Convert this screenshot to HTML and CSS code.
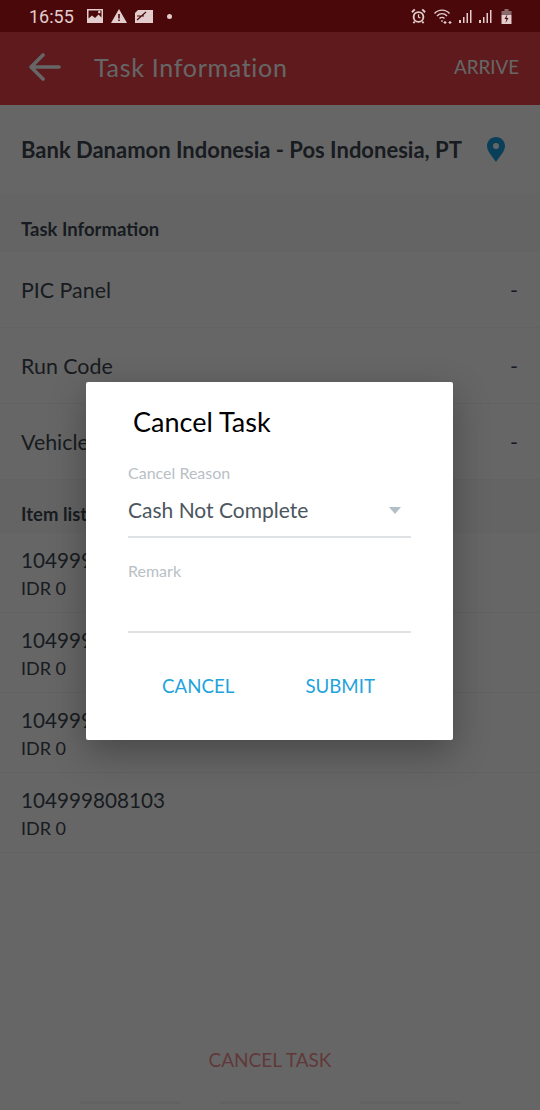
FILE: index.html
```html
<!DOCTYPE html>
<html lang="en">
<head>
    <meta charset="UTF-8">
    <meta name="viewport" content="width=device-width, initial-scale=1.0">
    <title>Task Information</title>
    <link rel="stylesheet" href="styles.css">
</head>
<body>
    <div id="phone">
        <div id="status-bar">
            <div class="status-left">
                <span class="clock">16:55</span>
                <!-- picture -->
                <svg class="status-icon" width="16" height="14" viewBox="0 0 16 14"><path fill="#e2cccc" fill-rule="evenodd" d="M0 0h16v14H0zM1.500 1.500v8l3.500-3 3 2.500 3.500-3.500 3 3V1.500zM11 3a1.300 1.300 0 1 1 0 .01z"/></svg>
                <!-- warning -->
                <svg class="status-icon warn" width="16" height="14" viewBox="0 0 16 14"><path fill="#e2cccc" fill-rule="evenodd" d="M8 0l8 14H0zM7.200 5v4.500h1.600V5zM7.200 10.500V12h1.600v-1.500z"/></svg>
                <!-- card -->
                <svg class="status-icon" width="18" height="13" viewBox="0 0 18 13"><path fill="#e2cccc" d="M3 0h15v13H0V3z"/><path stroke="#4b080b" stroke-width="1.200" fill="none" d="M2 10L11 2M2 6h7"/></svg>
                <span class="status-dot"></span>
            </div>
            <div class="status-right">
                <!-- alarm -->
                <svg class="alarm" width="15" height="16" viewBox="0 0 16 16"><circle cx="8" cy="9" r="5.200" fill="none" stroke="#e2cccc" stroke-width="2"/><path stroke="#e2cccc" stroke-width="1.300" fill="none" d="M8 6v3.200l2 1"/><path stroke="#e2cccc" stroke-width="2" d="M1 4l3-3M15 4l-3-3M4 14l-1.500 1.500M12 14l1.500 1.500"/></svg>
                <!-- wifi -->
                <svg class="wifi" width="21" height="16" viewBox="0 0 20 16"><path stroke="#e2cccc" stroke-width="1.400" fill="none" d="M1 5.500C5 1 12 1 16 5.500M3.500 8C6.500 5 10.500 5 13.500 8M6 10.500c1.500-1.500 3.500-1.500 5 0"/><path stroke="#e2cccc" stroke-width="1.200" d="M8.500 12v2M10 14.500h3M11.500 13v3M15 14.500h3M16.500 13v3"/></svg>
                <svg class="signal" width="14" height="14" viewBox="0 0 14 14"><path fill="#e2cccc" d="M0 11h2v3H0zM4 8h1.500v6H4zM7.500 4H9v10H7.500zM11 1h1.500v13H11z"/></svg>
                <svg class="signal" width="14" height="14" viewBox="0 0 14 14"><path fill="#e2cccc" d="M0 11h2v3H0zM4 8h1.500v6H4zM7.500 4H9v10H7.500zM11 1h1.500v13H11z"/></svg>
                <!-- battery -->
                <svg class="battery" width="11" height="15" viewBox="0 0 10 15"><path fill="#8a6a6a" d="M3 0h4v2h3v4H0V2h3z"/><path fill="#e2cccc" d="M0 6h10v9H0z"/><path fill="#4b080b" d="M6 5L3 10h2l-1 4 3-5H5z"/></svg>
            </div>
        </div>

        <div id="screen">
            <header class="toolbar">
                <svg class="back" width="32" height="28" viewBox="0 0 32 28"><path fill="none" stroke="#fff" stroke-width="3.600" stroke-linecap="round" stroke-linejoin="round" d="M2 14h28M14 2L2 14l12 12"/></svg>
                <h1>Task Information</h1>
                <span class="arrive">ARRIVE</span>
            </header>

            <section class="customer">
                <span class="customer-name">Bank Danamon Indonesia - Pos Indonesia, PT</span>
                <svg width="18" height="25" viewBox="0 0 18 25"><path fill="#1a9fe0" fill-rule="evenodd" d="M9 0c5 0 9 3.900 9 8.900C18 14.500 12 20 9 25 6 20 0 14.500 0 8.900 0 3.900 4 0 9 0zM9 6a3 3 0 1 0 0 6 3 3 0 0 0 0-6z"/></svg>
            </section>

            <h2 class="section-title title-info">Task Information</h2>
            <div class="info-row"><span>PIC Panel</span><span>-</span></div>
            <div class="info-row"><span>Run Code</span><span>-</span></div>
            <div class="info-row"><span>Vehicle</span><span>-</span></div>

            <h2 class="section-title title-items">Item list</h2>
            <div class="item-row"><span class="item-no">104999808100</span><span class="item-amount">IDR 0</span></div>
            <div class="item-row"><span class="item-no">104999808101</span><span class="item-amount">IDR 0</span></div>
            <div class="item-row"><span class="item-no">104999808102</span><span class="item-amount">IDR 0</span></div>
            <div class="item-row"><span class="item-no">104999808103</span><span class="item-amount">IDR 0</span></div>

            <div class="bottom">
                <button class="cancel-task">CANCEL TASK</button>
                <div class="nav-lines"><i></i><i></i><i></i></div>
            </div>

            <div id="scrim"></div>
        </div>

        <div id="dialog">
            <h3>Cancel Task</h3>
            <label class="field-label">Cancel Reason</label>
            <div class="select">
                <span>Cash Not Complete</span>
                <span class="caret"></span>
            </div>
            <label class="field-label remark-label">Remark</label>
            <div class="input"></div>
            <div class="actions">
                <button>CANCEL</button>
                <button>SUBMIT</button>
            </div>
        </div>
    </div>
</body>
</html>
```

FILE: styles.css
```css
* {
    box-sizing: border-box;
}
body {
    margin: 0;
    font-family: "Lato", "Open Sans", sans-serif;
    background-color: #fff;
}
#phone {
    position: relative;
    width: 540px;
    height: 1110px;
    overflow: hidden;
    display: flex;
    flex-direction: column;
}
#status-bar {
    height: 32px;
    flex-shrink: 0;
    background-color: #4b080b;
    color: #e2cccc;
    display: flex;
    align-items: center;
    justify-content: space-between;
    padding: 0 28px 0 29px;
}
.status-left,
.status-right {
    display: flex;
    align-items: center;
}
.clock {
    font-family: "Roboto", sans-serif;
    font-size: 18px;
    margin-right: 13px;
}
.status-icon {
    margin-right: 8px;
}
.status-dot {
    width: 5px;
    height: 5px;
    margin-left: 6px;
    border-radius: 50%;
    background-color: #e2cccc;
}
.wifi {
    margin-left: 7px;
}
.signal {
    margin-left: 5px;
}
.signal + .signal {
    margin-left: 6px;
}
.battery {
    margin-left: 8px;
}
#screen {
    position: relative;
    flex: 1;
    display: flex;
    flex-direction: column;
    color: #3d4850;
    background-color: #fff;
}
.toolbar {
    height: 73px;
    flex-shrink: 0;
    background-color: #eb4148;
    color: #fff;
    display: flex;
    align-items: center;
    padding: 0 21px 4px 29px;
}
.toolbar h1 {
    flex: 1;
    margin: 0 0 0 33px;
    font-size: 25px;
    font-weight: 400;
    letter-spacing: 0.7px;
}
.arrive {
    font-size: 18.800px;
}
.customer {
    height: 88px;
    flex-shrink: 0;
    display: flex;
    align-items: center;
    justify-content: space-between;
    padding: 0 35px 0 21px;
}
.customer-name {
    font-size: 22px;
    font-weight: 700;
    white-space: nowrap;
}
.section-title {
    margin: 0;
    padding: 0 21px;
    display: flex;
    align-items: center;
    font-size: 18.500px;
    font-weight: 700;
    flex-shrink: 0;
    background-color: #fbfbfb;
}
.title-info {
    height: 59px;
    padding-top: 13px;
}
.title-items {
    height: 53px;
    padding-top: 14px;
}
.info-row {
    height: 76px;
    flex-shrink: 0;
    display: flex;
    align-items: center;
    justify-content: space-between;
    padding: 0 22px 0 21px;
    border-bottom: 1px solid #f4f4f4;
    font-size: 21.400px;
}
.item-row {
    height: 80px;
    flex-shrink: 0;
    display: flex;
    flex-direction: column;
    justify-content: center;
    padding: 1px 21px 0;
    border-bottom: 1px solid #f4f4f4;
}
.item-no {
    font-size: 20.700px;
    line-height: 28px;
}
.item-amount {
    font-size: 18px;
    line-height: 26px;
    margin-top: 1px;
}
.bottom {
    flex: 1;
    display: flex;
    flex-direction: column;
    justify-content: flex-end;
    align-items: center;
}
.cancel-task {
    border: none;
    background: none;
    padding: 0;
    font-family: inherit;
    font-size: 19px;
    color: #eb4148;
    opacity: 0.6;
    margin-bottom: 30px;
}
.nav-lines {
    display: flex;
    gap: 40px;
    margin-bottom: 6px;
}
.nav-lines i {
    display: block;
    width: 100px;
    height: 3px;
    background-color: #f4f4f4;
}
#scrim {
    position: absolute;
    inset: 0;
    background-color: rgba(0, 0, 0, 0.6);
}
#dialog {
    position: absolute;
    left: 86px;
    top: 382px;
    width: 367px;
    height: 358px;
    background-color: #fff;
    border-radius: 2px;
    box-shadow: 0 12px 36px rgba(0, 0, 0, 0.3);
    padding: 0 42px;
    display: flex;
    flex-direction: column;
}
#dialog h3 {
    margin: 23px 0 0 5px;
    font-size: 27px;
    line-height: 34px;
    font-weight: 400;
    color: #000;
}
.field-label {
    margin-top: 25px;
    font-size: 16px;
    line-height: 18px;
    color: #b9c0c5;
}
.select {
    height: 56px;
    display: flex;
    align-items: center;
    justify-content: space-between;
    padding: 2px 10px 2px 0;
    border-bottom: 2px solid #dfe2e4;
    font-size: 21px;
    color: #4b565e;
}
.caret {
    width: 0;
    height: 0;
    margin-top: 2px;
    border-left: 6px solid transparent;
    border-right: 6px solid transparent;
    border-top: 7px solid #b3bfc6;
}
.remark-label {
    margin-top: 24px;
}
.input {
    height: 53px;
    border-bottom: 2px solid #dfe2e4;
}
.actions {
    display: flex;
    justify-content: space-between;
    padding: 0 36px 0 34px;
    margin-top: 42px;
}
.actions button {
    border: none;
    background: none;
    padding: 0;
    font-family: inherit;
    font-size: 18.700px;
    color: #1fa3dc;
}
```
